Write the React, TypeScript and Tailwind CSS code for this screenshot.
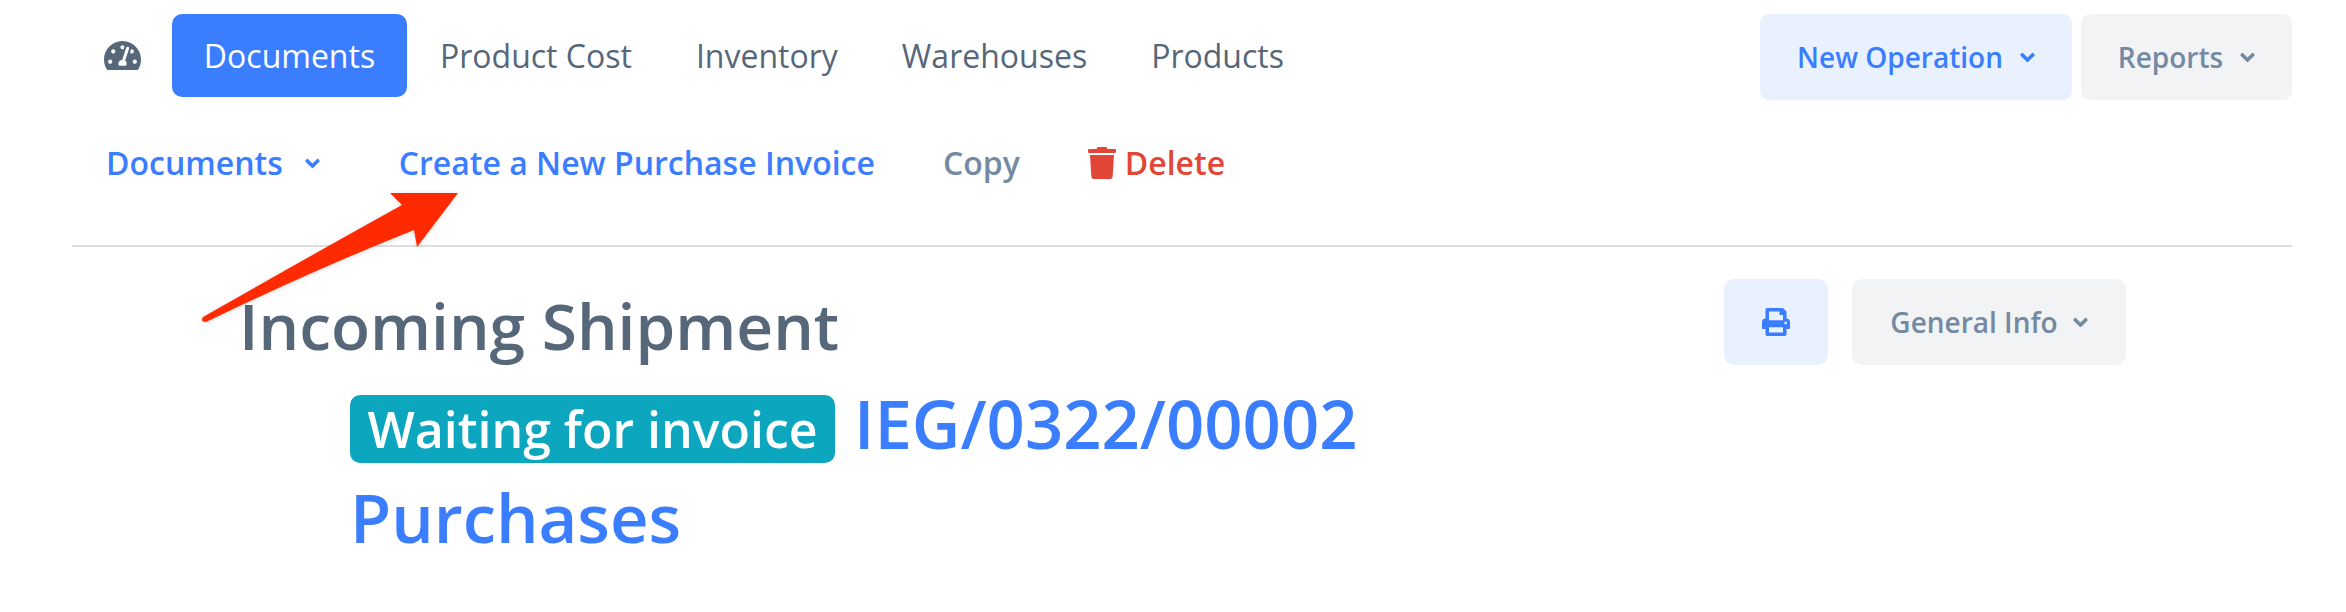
import { FaAngleDown, FaPrint, FaTachometerAlt, FaTrash } from "react-icons/fa";

const navItems = ["Product Cost", "Inventory", "Warehouses", "Products"];

function Caret({ className }: { className?: string }) {
  return <FaAngleDown className={`w-[15px] h-[23px] ${className ?? ""}`} />;
}

export default function App() {
  return (
    <div className="relative w-[2346px] h-[612px] overflow-hidden bg-white font-['Open_Sans',sans-serif]">
      {/* top nav */}
      <div className="flex items-start pt-[14px] pl-[104px] pr-[54px]">
        <div className="flex items-center h-[83px] w-[68px]">
          <FaTachometerAlt className="w-[37px] h-[33px] text-[#56677a]" />
        </div>
        <a className="flex items-center justify-center w-[235px] h-[83px] rounded-[10px] bg-[#3a7dff] text-white text-[32px]">
          Documents
        </a>
        <div className="flex items-center h-[83px] ml-[33px] gap-[64px] text-[32px] text-[#56677a]">
          {navItems.map((item) => (
            <span key={item}>{item}</span>
          ))}
        </div>
        <div className="ml-auto flex gap-[9px]">
          <button className="flex items-center justify-center gap-[17px] w-[312px] h-[86px] rounded-[9px] bg-[#e9f1fe] text-[#3a7dff] text-[28px] font-semibold">
            New Operation
            <Caret />
          </button>
          <button className="flex items-center justify-center gap-[17px] w-[211px] h-[86px] rounded-[9px] bg-[#f1f3f5] text-[#748aa3] text-[28px] font-semibold">
            Reports
            <Caret />
          </button>
        </div>
      </div>

      {/* sub nav */}
      <div className="flex items-center h-[60px] mt-[33px] pl-[106px] text-[32px] font-semibold">
        <span className="text-[#3a7dff]">Documents</span>
        <Caret className="ml-[22px] text-[#3a7dff]" />
        <span className="ml-[79px] text-[#3a7dff]">Create a New Purchase Invoice</span>
        <span className="ml-[68px] text-[#748aa3]">Copy</span>
        <FaTrash className="ml-[68px] w-[28px] h-[32px] text-[#e24637]" />
        <span className="ml-[9px] text-[#e24637]">Delete</span>
      </div>

      <div className="ml-[72px] mr-[54px] mt-[52px] h-[2px] bg-[#dedede]" />

      {/* header block */}
      <div className="flex items-start mt-[32px] pl-[239px] pr-[220px]">
        <h1 className="mt-[4px] text-[64px] leading-[86px] font-semibold text-[#56677a]">Incoming Shipment</h1>
        <div className="ml-auto flex gap-[24px]">
          <button className="flex items-center justify-center w-[104px] h-[86px] rounded-[10px] bg-[#e9f1fe] text-[#3a7dff]">
            <FaPrint className="w-[28px] h-[28px]" />
          </button>
          <button className="flex items-center justify-center gap-[15px] w-[274px] h-[86px] rounded-[10px] bg-[#f1f3f5] text-[#748aa3] text-[28px] font-semibold">
            General Info
            <Caret />
          </button>
        </div>
      </div>

      <div className="pl-[350px] mt-[20px]">
        <div className="flex items-start gap-[19px]">
          <span className="flex items-center justify-center w-[485px] h-[68px] mt-[6px] rounded-[10px] bg-[#0ca7bf] text-white text-[50px] font-semibold">
            Waiting for invoice
          </span>
          <span className="text-[67px] leading-[68px] font-semibold text-[#3a7dff]">IEG/0322/00002</span>
        </div>
        <div className="mt-[10px] text-[67px] leading-[88px] font-semibold text-[#3a7dff]">Purchases</div>
      </div>

      {/* annotation arrow */}
      <svg className="absolute left-0 top-0 pointer-events-none drop-shadow-sm" width="2346" height="612" viewBox="0 0 2346 612">
        <path
          d="M203 317 Q310 256 402 205 L390 193 L458 193 L417 247 L414 230 Q318 268 206 322 Q200 322 203 317 Z"
          fill="#ff2a00"
        />
      </svg>
    </div>
  );
}
